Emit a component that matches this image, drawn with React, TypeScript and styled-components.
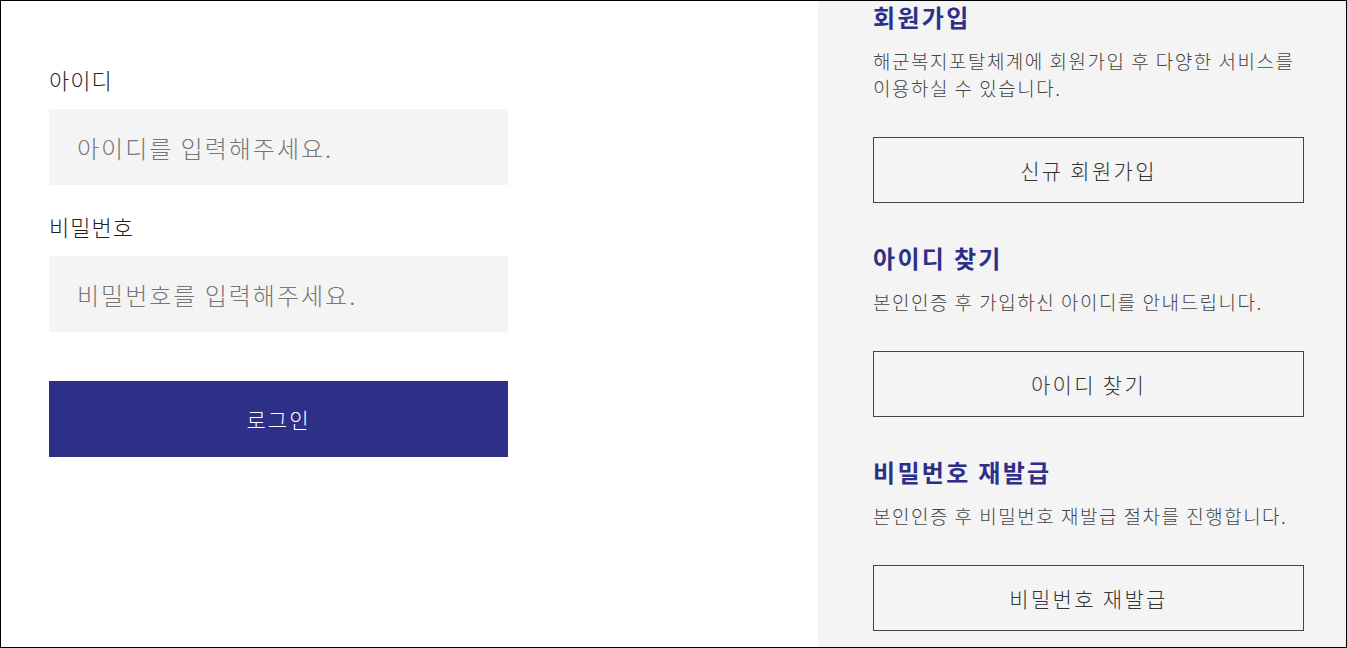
import styled, { createGlobalStyle } from 'styled-components';

const GlobalStyle = createGlobalStyle`
  html, body {
    margin: 0;
    padding: 0;
    background: #ffffff;
  }
  body {
    font-family: "Noto Sans CJK KR", "Noto Sans", sans-serif;
    font-weight: 300;
  }
  * {
    box-sizing: border-box;
  }
`;

const Frame = styled.div`
  width: 1347px;
  height: 648px;
  border: 1px solid #000;
  display: flex;
  overflow: hidden;
  background: #fff;
`;

const LoginColumn = styled.form`
  width: 817px;
  padding: 63px 0 0 48px;
  display: flex;
  flex-direction: column;
`;

const Field = styled.div`
  width: 459px;
  display: flex;
  flex-direction: column;
  gap: 15px;
  margin-bottom: 26px;
`;

const Label = styled.label`
  font-size: 22px;
  line-height: 30px;
  letter-spacing: 1px;
  color: #222;
`;

const Input = styled.input`
  height: 76px;
  width: 100%;
  border: none;
  outline: none;
  background: #f4f4f4;
  padding: 0 28px;
  font-family: inherit;
  font-weight: 300;
  font-size: 24px;
  letter-spacing: 2px;
  color: #333;

  &::placeholder {
    color: #767676;
  }
`;

const LoginButton = styled.button`
  width: 459px;
  height: 76px;
  margin-top: 23px;
  border: none;
  background: #2e3087;
  color: #fff;
  font-family: inherit;
  font-weight: 300;
  font-size: 21px;
  letter-spacing: 2px;
  cursor: pointer;
`;

const SidePanel = styled.aside`
  flex: 1;
  background: #f4f4f4;
  padding: 0 42px 0 55px;
  display: flex;
  flex-direction: column;
  gap: 39px;
`;

const Section = styled.section`
  display: flex;
  flex-direction: column;
`;

const SectionTitle = styled.h2`
  margin: 0;
  font-size: 24px;
  line-height: 31px;
  font-weight: 700;
  letter-spacing: 2.3px;
  color: #2e3087;
`;

const SectionText = styled.p`
  margin: 15px 0 36px;
  font-size: 19px;
  line-height: 27px;
  letter-spacing: 1.5px;
  color: #444;
`;

const OutlineButton = styled.button`
  width: 431px;
  height: 66px;
  border: 1px solid #444;
  background: transparent;
  color: #333;
  font-family: inherit;
  font-weight: 300;
  font-size: 21px;
  letter-spacing: 2.3px;
  cursor: pointer;
`;

const sections = [
  {
    title: '회원가입',
    text: '해군복지포탈체계에 회원가입 후 다양한 서비스를 이용하실 수 있습니다.',
    action: '신규 회원가입',
  },
  {
    title: '아이디 찾기',
    text: '본인인증 후 가입하신 아이디를 안내드립니다.',
    action: '아이디 찾기',
  },
  {
    title: '비밀번호 재발급',
    text: '본인인증 후 비밀번호 재발급 절차를 진행합니다.',
    action: '비밀번호 재발급',
  },
];

export default function App() {
  return (
    <>
      <GlobalStyle />
      <Frame>
        <LoginColumn onSubmit={(e) => e.preventDefault()}>
          <Field>
            <Label htmlFor="userId">아이디</Label>
            <Input id="userId" type="text" placeholder="아이디를 입력해주세요." />
          </Field>
          <Field>
            <Label htmlFor="userPw">비밀번호</Label>
            <Input id="userPw" type="password" placeholder="비밀번호를 입력해주세요." />
          </Field>
          <LoginButton type="submit">로그인</LoginButton>
        </LoginColumn>

        <SidePanel>
          {sections.map((s) => (
            <Section key={s.title}>
              <SectionTitle>{s.title}</SectionTitle>
              <SectionText>{s.text}</SectionText>
              <OutlineButton type="button">{s.action}</OutlineButton>
            </Section>
          ))}
        </SidePanel>
      </Frame>
    </>
  );
}
